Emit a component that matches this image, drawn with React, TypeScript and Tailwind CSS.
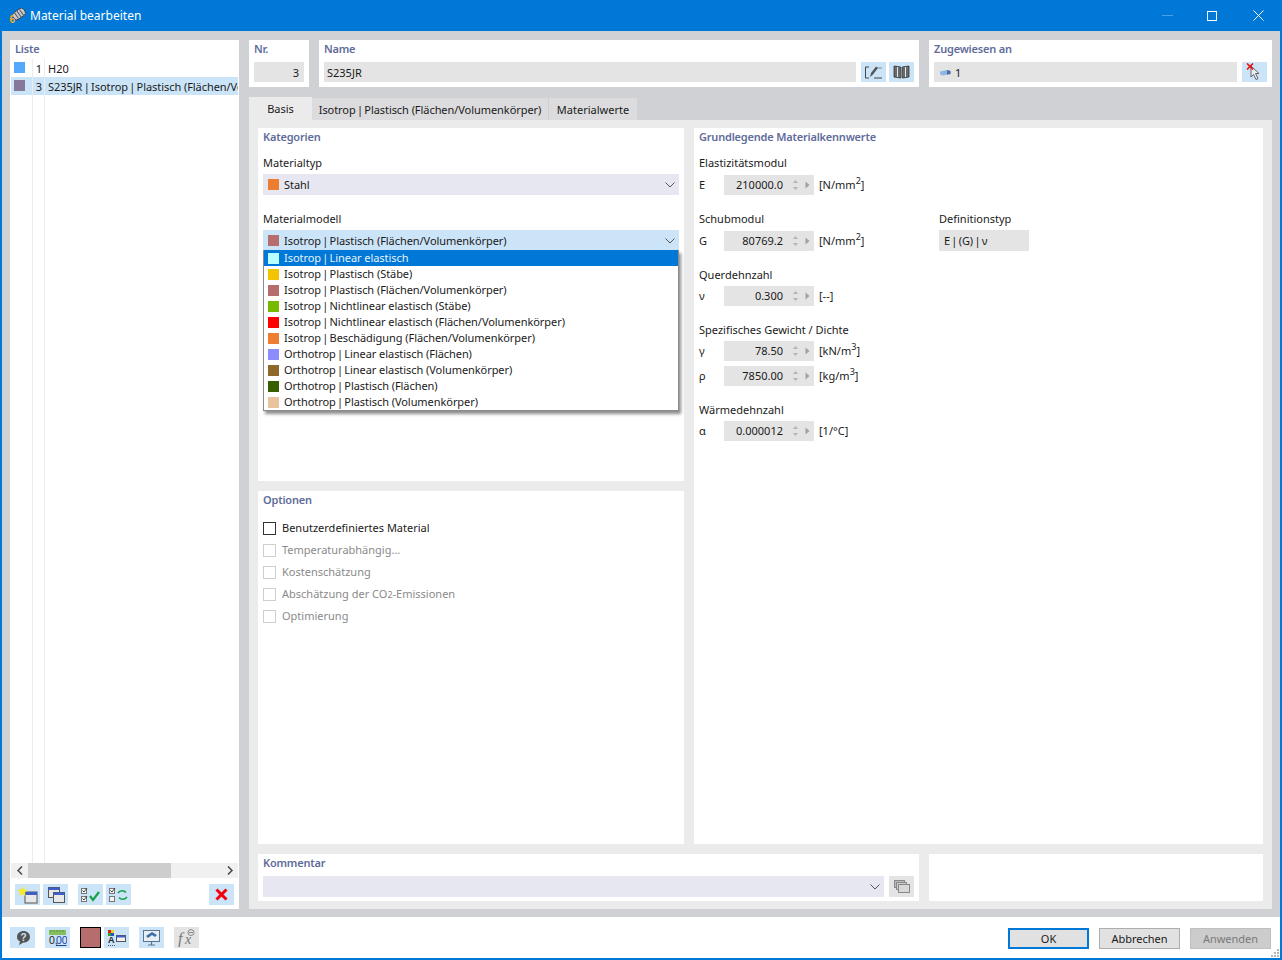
const models = [
  ["#b9ffff", "Isotrop | Linear elastisch"],
  ["#f5c400", "Isotrop | Plastisch (Stäbe)"],
  ["#b56d6d", "Isotrop | Plastisch (Flächen/Volumenkörper)"],
  ["#76b900", "Isotrop | Nichtlinear elastisch (Stäbe)"],
  ["#ff0000", "Isotrop | Nichtlinear elastisch (Flächen/Volumenkörper)"],
  ["#ed7d31", "Isotrop | Beschädigung (Flächen/Volumenkörper)"],
  ["#8c8cff", "Orthotrop | Linear elastisch (Flächen)"],
  ["#8f672a", "Orthotrop | Linear elastisch (Volumenkörper)"],
  ["#375f00", "Orthotrop | Plastisch (Flächen)"],
  ["#e8c39e", "Orthotrop | Plastisch (Volumenkörper)"],
];

// the pipes sit tighter in the original font
const Piped = ({ text }: { text: string }) => (
  <span className="tracking-[-0.06px]">
    {text.split(" | ").map((part, i) => (
      <span key={i}>
        {i > 0 && <span className="mx-[-1.5px]"> | </span>}
        {part}
      </span>
    ))}
  </span>
);

const Chevron = () => (
  <svg width="10" height="6" viewBox="0 0 10 6" fill="none">
    <path d="M0.5 0.5L5 5L9.5 0.5" stroke="#555" strokeWidth="1" />
  </svg>
);

const Combo = ({ color, text, active }: { color?: string; text: string; active?: boolean }) => (
  <div className={`h-[21px] flex items-center pl-[5px] pr-[4px] ${active ? "bg-[#cce4f7]" : "bg-[#e7e7f1]"}`}>
    {color && <div className="w-[11px] h-[11px]" style={{ background: color }} />}
    <span className="ml-[5px] mb-px text-[#1a1a1a]"><Piped text={text} /></span>
    <div className="ml-auto"><Chevron /></div>
  </div>
);

const Title = ({ children }: { children: React.ReactNode }) => (
  <div className="h-[18px] pb-[2px] flex items-center font-semibold tracking-[-0.2px] text-[#5f6c9b]">{children}</div>
);

const Spin = ({ sym, value, unit }: { sym: string; value: string; unit: React.ReactNode }) => (
  <div className="flex items-center h-5">
    <span className="w-[25px] mb-[2px] text-[#1a1a1a]">{sym}</span>
    <div className="w-[90px] h-5 bg-[#e4e4e4] flex items-center">
      <span className="w-[59px] mb-[2px] text-right text-[#1a1a1a]">{value}</span>
      <svg className="ml-[9px]" width="7" height="12" viewBox="0 0 7 12" fill="#b5b5b5">
        <path d="M3.5 1L6 4H1Z" />
        <path d="M3.5 11L6 8H1Z" />
      </svg>
      <svg className="ml-[6px]" width="5" height="8" viewBox="0 0 5 8" fill="#a0a0a0">
        <path d="M0.5 0.5L4.5 4L0.5 7.5Z" />
      </svg>
    </div>
    <span className="ml-[5px] mb-[2px] text-[#1a1a1a]">{unit}</span>
  </div>
);

const Label = ({ className, children }: { className?: string; children: React.ReactNode }) => (
  <div className={`h-4 pb-[2px] flex items-center text-[#1a1a1a] ${className ?? ""}`}>{children}</div>
);

const Check = ({ text, enabled }: { text: React.ReactNode; enabled?: boolean }) => (
  <div className="h-[22px] flex items-center">
    <div className={`w-[13px] h-[13px] border ${enabled ? "border-[#333] bg-white" : "border-[#cfcfcf] bg-white"}`} />
    <span className={`ml-[6px] mb-[2px] ${enabled ? "text-[#1a1a1a]" : "text-[#8a8a8a]"}`}>{text}</span>
  </div>
);

const IconBtn = ({ children, off }: { children: React.ReactNode; off?: boolean }) => (
  <div className={`w-[25px] h-[21px] flex items-center justify-center shrink-0 ${off ? "bg-[#e4e4e4]" : "bg-[#cce4f7]"}`}>
    {children}
  </div>
);

const Win = ({ x, y }: { x: number; y: number }) => (
  <g>
    <rect x={x} y={y} width="11" height="10" fill="#e8e8e8" stroke="#555" />
    <rect x={x} y={y} width="11" height="2.5" fill="#3f5fc8" />
  </g>
);

const Box = ({ x, y }: { x: number; y: number }) => (
  <rect x={x + 0.5} y={y + 0.5} width="5" height="5" fill="#f4f4f4" stroke="#777" />
);

const EditIcon = () => (
  <svg width="19" height="15" viewBox="0 0 19 15" fill="none">
    <path d="M5 2H1.5V13H5M10 13H18" stroke="#444" />
    <path d="M6 12L7 8L12 1.5L14 3L9 9.5Z" fill="#555" />
    <path d="M13 3H18" stroke="#888" />
  </svg>
);

const BookIcon = () => (
  <svg width="17" height="14" viewBox="0 0 17 14">
    <path d="M1 1L7.8 2V13L1 12Z" fill="#6a6a6a" stroke="#333" strokeWidth="0.8" />
    <path d="M16 1L9.2 2V13L16 12Z" fill="#6a6a6a" stroke="#333" strokeWidth="0.8" />
    <path d="M4.5 2V12M12.5 2V12" stroke="#dbe6ef" strokeWidth="1" />
  </svg>
);

const PickIcon = () => (
  <svg width="19" height="18" viewBox="0 0 19 18">
    <path d="M6 3L6 14L8.5 11.5L11 16.5L13 15.5L10.5 10.5L14 10.5Z" fill="#eee" stroke="#555" strokeWidth="0.9" />
    <path d="M2 0.5L8 6.5M8 0.5L2 6.5" stroke="#f01010" strokeWidth="1.6" />
  </svg>
);

const CubeIcon = () => (
  <svg width="11" height="7" viewBox="0 0 11 7">
    <path d="M0 2.5L7 1L10.5 2V5L3 6.5L0 5.5Z" fill="#8fb6e4" />
    <path d="M7 1L10.5 2V5L7 5.5Z" fill="#4d6f9e" />
  </svg>
);

const TitleIcon = () => (
  <svg width="17" height="17" viewBox="0 0 17 17">
    <g transform="rotate(-35 10 7)">
      <rect x="3.5" y="3" width="13" height="8" rx="3" fill="#c6cbd3" stroke="#3e434b" strokeWidth="0.9" />
      <path d="M7 3.5V10.5M10 3.5V10.5M13 3.5V10.5" stroke="#555a63" strokeWidth="1" />
    </g>
    <text x="0.5" y="15.5" fontSize="10" fontWeight="700" fill="#f2b01e" fontFamily="Liberation Sans, sans-serif">6</text>
  </svg>
);

export default function App() {
  return (
    <div className="w-[1282px] h-[960px] flex flex-col border-x-2 border-b-2 border-[#0078d7] bg-white font-['Noto_Sans',sans-serif] text-[11px] leading-none overflow-hidden">
      {/* Title bar */}
      <div className="h-[31px] -mx-[2px] bg-[#0078d7] flex items-center shrink-0 text-white">
        <div className="ml-[9px] w-[18px] flex"><TitleIcon /></div>
        <span className="ml-[3px] text-[12px]">Material bearbeiten</span>
        <div className="ml-auto flex items-center">
          <div className="w-[11px] h-px bg-[#4c9fe3] mr-[34px]" />
          <div className="w-[10px] h-[10px] border border-white mr-[36px]" />
          <svg className="mr-[18px]" width="11" height="11" viewBox="0 0 11 11" stroke="#fff" fill="none">
            <path d="M0.5 0.5L10.5 10.5M10.5 0.5L0.5 10.5" />
          </svg>
        </div>
      </div>

      <div className="flex-1 min-h-0 bg-[#d0d1d5] flex gap-[10px] pl-[8px] pr-[8px] pt-[9px] pb-2">
        {/* List */}
        <div className="w-[229px] bg-white flex flex-col">
          <div className="h-[19px] pb-[2px] pl-[5px] flex items-center font-semibold tracking-[-0.2px] text-[#5f6c9b]">Liste</div>
          <div className="flex-1 min-h-0 flex flex-col ml-px">
            <div className="h-[18px] flex items-center overflow-hidden">
              <div className="w-[21px] h-full shrink-0 pl-[3px] pt-[3px]"><div className="w-[11px] h-[11px] bg-[#54a9ff]" /></div>
              <div className="w-3 h-full shrink-0 border-l border-[#ececec] flex items-center justify-end pr-[2px] text-[#1a1a1a]">1</div>
              <div className="h-full border-l border-[#ececec] flex items-center pl-[3px] text-[#1a1a1a]">H20</div>
            </div>
            <div className="h-[18px] mr-px flex items-center bg-[#cce4f7] overflow-hidden">
              <div className="w-[21px] h-full shrink-0 pl-[3px] pt-[3px]"><div className="w-[11px] h-[11px] bg-[#86789a]" /></div>
              <div className="w-3 h-full shrink-0 border-l border-[#ececec] flex items-center justify-end pr-[2px] text-[#1a1a1a]">3</div>
              <div className="h-full shrink-0 border-l border-[#ececec] flex items-center pl-[3px] text-[#1a1a1a] whitespace-nowrap">
                <Piped text="S235JR | Isotrop | Plastisch (Flächen/Volumenkörper)" />
              </div>
            </div>
            <div className="flex-1 flex">
              <div className="w-[21px]" />
              <div className="w-3 border-l border-[#ececec]" />
              <div className="border-l border-[#ececec]" />
            </div>
          </div>
          {/* Scrollbar */}
          <div className="h-[15px] mx-px bg-[#f0f0f0] flex items-center shrink-0">
            <div className="w-[17px] flex justify-center">
              <svg width="6" height="9" viewBox="0 0 6 9" fill="none" stroke="#444" strokeWidth="1.5"><path d="M5 0.5L1 4.5L5 8.5" /></svg>
            </div>
            <div className="w-[143px] h-full bg-[#cdcdcd]" />
            <div className="ml-auto w-[17px] flex justify-center">
              <svg width="6" height="9" viewBox="0 0 6 9" fill="none" stroke="#444" strokeWidth="1.5"><path d="M1 0.5L5 4.5L1 8.5" /></svg>
            </div>
          </div>
          <div className="h-[31px] shrink-0 pl-[5px] pr-[5px] pt-[6px] flex">
            <div className="flex gap-[3px]">
              <IconBtn>
                <svg width="21" height="18" viewBox="0 0 21 18">
                  <rect x="8" y="6" width="12" height="11" fill="#e8e8e8" stroke="#555" />
                  <rect x="8" y="6" width="12" height="3" fill="#3f5fc8" />
                  <path d="M5.5 0L7 3.5L10.5 4L8 6.5L8.5 10L5.5 8.2L2.5 10L3 6.5L0.5 4L4 3.5Z" fill="#f7e92a" />
                </svg>
              </IconBtn>
              <IconBtn>
                <svg width="18" height="18" viewBox="0 0 18 18"><Win x={1.5} y={1.5} /><Win x={6.5} y={6.5} /></svg>
              </IconBtn>
            </div>
            <div className="flex gap-[3px] ml-[10px]">
              <IconBtn>
                <svg width="19" height="16" viewBox="0 0 19 16" fill="none">
                  <Box x={0} y={1} /><Box x={0} y={9} />
                  <path d="M1.5 3.5L3 5L6 1M1.5 11.5L3 13L6 9" stroke="#333" strokeWidth="0.9" />
                  <path d="M9 9L12 13L18 5" stroke="#16a34a" strokeWidth="2.2" />
                </svg>
              </IconBtn>
              <IconBtn>
                <svg width="19" height="16" viewBox="0 0 19 16" fill="none">
                  <Box x={0} y={1} /><Box x={0} y={9} />
                  <path d="M1.5 3.5L3 5L6 1" stroke="#333" strokeWidth="0.9" />
                  <path d="M9 6C11 3 15 3 17 5.5M18 10C15.5 13 12 13 10 10.5" stroke="#16a34a" strokeWidth="1.6" />
                </svg>
              </IconBtn>
            </div>
            <div className="ml-auto">
              <IconBtn>
                <svg width="13" height="13" viewBox="0 0 13 13" fill="none"><path d="M1.5 1.5L11.5 11.5M11.5 1.5L1.5 11.5" stroke="#f5000a" strokeWidth="3" /></svg>
              </IconBtn>
            </div>
          </div>
        </div>

        {/* Right column */}
        <div className="flex-1 min-w-0 flex flex-col">
          <div className="flex gap-[10px] h-[47px] shrink-0">
            <div className="w-[60px] bg-white px-[5px]">
              <Title>Nr.</Title>
              <div className="mt-[4px] h-5 bg-[#e4e4e4] flex items-center justify-end pr-[5px] text-[#1a1a1a]">3</div>
            </div>
            <div className="w-[600px] bg-white px-[5px]">
              <Title>Name</Title>
              <div className="mt-[4px] flex">
                <div className="flex-1 h-5 bg-[#e4e4e4] flex items-center pl-[3px] text-[#1a1a1a]">S235JR</div>
                <div className="ml-[5px] flex gap-[3px]">
                  <div className="w-[25px] h-5 bg-[#cce4f7] flex items-center justify-center"><EditIcon /></div>
                  <div className="w-[25px] h-5 bg-[#cce4f7] flex items-center justify-center"><BookIcon /></div>
                </div>
              </div>
            </div>
            <div className="flex-1 bg-white px-[5px]">
              <Title>Zugewiesen an</Title>
              <div className="mt-[4px] flex">
                <div className="flex-1 h-5 bg-[#e4e4e4] flex items-center pl-[6px] text-[#1a1a1a]">
                  <CubeIcon /><span className="ml-[4px]">1</span>
                </div>
                <div className="ml-[5px] w-[25px] h-5 bg-[#cce4f7] flex items-center justify-center"><PickIcon /></div>
              </div>
            </div>
          </div>

          {/* Tabs */}
          <div className="mt-[10px] h-[23px] flex items-end shrink-0 text-[#1a1a1a]">
            <div className="w-[63px] h-[23px] bg-[#ebebeb] flex items-center justify-center">Basis</div>
            <div className="w-[237px] h-[22px] bg-[#dcdcde] flex items-center justify-center border-r border-[#cfcfcf]">
              <Piped text="Isotrop | Plastisch (Flächen/Volumenkörper)" />
            </div>
            <div className="w-[88px] h-[22px] bg-[#dcdcde] flex items-center justify-center">Materialwerte</div>
          </div>

          <div className="flex-1 min-h-0 bg-[#ebebeb] px-[9px] pt-2 pb-2 flex flex-col gap-[10px]">
            <div className="flex-1 min-h-0 flex gap-[10px]">
              <div className="w-[426px] flex flex-col gap-[10px]">
                {/* Kategorien */}
                <div className="h-[353px] bg-white px-[5px] relative">
                  <Title>Kategorien</Title>
                  <Label className="mt-[9px]">Materialtyp</Label>
                  <div className="mt-[3px]"><Combo color="#ed7d31" text="Stahl" /></div>
                  <Label className="mt-4">Materialmodell</Label>
                  <div className="mt-[3px]"><Combo active color="#b56d6d" text="Isotrop | Plastisch (Flächen/Volumenkörper)" /></div>
                  {/* Open dropdown */}
                  <div className="absolute left-[5px] top-[122px] w-[416px] bg-white border border-[#8c8c8c] border-t-0 shadow-[2px_3px_3px_rgba(0,0,0,0.45)] z-10">
                    {models.map(([c, t], i) => (
                      <div key={t} className={`h-4 flex items-center pl-[4px] ${i === 0 ? "bg-[#0078d7] text-[#e6f2fc]" : "text-[#1a1a1a]"}`}>
                        <div className="w-[11px] h-[11px]" style={{ background: c }} />
                        <span className="ml-[5px] mb-[2px]"><Piped text={t} /></span>
                      </div>
                    ))}
                  </div>
                </div>
                {/* Optionen */}
                <div className="flex-1 bg-white px-[5px]">
                  <Title>Optionen</Title>
                  <div className="mt-[8px]">
                    <Check enabled text="Benutzerdefiniertes Material" />
                    <Check text="Temperaturabhängig..." />
                    <Check text="Kostenschätzung" />
                    <Check text={<>Abschätzung der CO<span className="text-[9px]">2</span>-Emissionen</>} />
                    <Check text="Optimierung" />
                  </div>
                </div>
              </div>

              {/* Kennwerte */}
              <div className="flex-1 bg-white px-[5px]">
                <Title>Grundlegende Materialkennwerte</Title>
                <Label className="mt-[9px]">Elastizitätsmodul</Label>
                <div className="mt-[4px]"><Spin sym="E" value="210000.0" unit={<>[N/mm<sup className="text-[9px]">2</sup>]</>} /></div>
                <div className="mt-4 flex">
                  <div className="w-[240px]">
                    <Label>Schubmodul</Label>
                    <div className="mt-[4px]"><Spin sym="G" value="80769.2" unit={<>[N/mm<sup className="text-[9px]">2</sup>]</>} /></div>
                  </div>
                  <div>
                    <Label>Definitionstyp</Label>
                    <div className="mt-[3px] w-[90px] h-[21px] bg-[#e4e4e4] flex items-center pl-[5px] text-[#1a1a1a]">
                      <Piped text="E | (G) | ν" />
                    </div>
                  </div>
                </div>
                <Label className="mt-4">Querdehnzahl</Label>
                <div className="mt-[3px]"><Spin sym="ν" value="0.300" unit="[--]" /></div>
                <Label className="mt-4">Spezifisches Gewicht / Dichte</Label>
                <div className="mt-[3px]"><Spin sym="γ" value="78.50" unit={<>[kN/m<sup className="text-[9px]">3</sup>]</>} /></div>
                <div className="mt-[5px]"><Spin sym="ρ" value="7850.00" unit={<>[kg/m<sup className="text-[9px]">3</sup>]</>} /></div>
                <Label className="mt-4">Wärmedehnzahl</Label>
                <div className="mt-[3px]"><Spin sym="α" value="0.000012" unit="[1/°C]" /></div>
              </div>
            </div>

            {/* Kommentar */}
            <div className="h-[47px] shrink-0 flex gap-[10px]">
              <div className="w-[661px] bg-white px-[5px]">
                <Title>Kommentar</Title>
                <div className="mt-[4px] flex">
                  <div className="flex-1 h-[21px] bg-[#e7e7f1] flex items-center justify-end pr-[4px]"><Chevron /></div>
                  <div className="ml-[5px]">
                    <IconBtn off>
                      <svg width="16" height="13" viewBox="0 0 16 13">
                        <rect x="0.5" y="0.5" width="10" height="7" fill="#bbb" stroke="#888" />
                        <rect x="2.5" y="2.5" width="10" height="7" fill="#ccc" stroke="#888" />
                        <rect x="4.5" y="4.5" width="11" height="8" fill="#d8d8d8" stroke="#888" />
                      </svg>
                    </IconBtn>
                  </div>
                </div>
              </div>
              <div className="flex-1 bg-white" />
            </div>
          </div>
        </div>
      </div>

      {/* Footer */}
      <div className="h-[41px] shrink-0 flex items-center pl-[8px] pr-[9px] relative">
        <div className="flex items-center">
          <IconBtn>
            <svg width="16" height="16" viewBox="0 0 16 16">
              <path d="M8.5 1C12 1 15 3.5 15 7C15 10.5 12 12.5 8.5 12.5L4 15L5 11.5C2.5 10.5 2 8.5 2 7C2 3.5 5 1 8.5 1Z" fill="#555" />
              <text x="5.5" y="10.5" fontSize="10" fontWeight="700" fill="#cce4f7" fontFamily="Liberation Sans, sans-serif">?</text>
            </svg>
          </IconBtn>
          <div className="ml-[10px]">
            <IconBtn>
              <svg width="19" height="18" viewBox="0 0 19 18">
                <rect x="1" y="1" width="17" height="5" fill="#86bf60" />
                <path d="M3 1V3M6 1V3M9 1V3M12 1V3M15 1V3" stroke="#4c8a2e" strokeWidth="0.8" />
                <text x="1" y="15" fontSize="10.5" fill="#222" fontFamily="Liberation Sans, sans-serif">0,</text>
                <text x="8" y="15" fontSize="10.5" fill="#1d3f9c" fontFamily="Liberation Sans, sans-serif">00</text>
                <path d="M8 16.5H18.5" stroke="#1d3f9c" />
              </svg>
            </IconBtn>
          </div>
          <div className="ml-[10px] w-[21px] h-[21px] bg-[#b56d6d] border border-black" />
          <div className="ml-[3px]">
            <IconBtn>
              <svg width="19" height="18" viewBox="0 0 19 18">
                <rect x="1" y="1" width="3" height="3" fill="#e01b1b" />
                <rect x="4" y="1" width="3" height="3" fill="#e8d820" />
                <rect x="1" y="4" width="3" height="3" fill="#2e9e2e" />
                <rect x="4" y="4" width="3" height="3" fill="#2a4fd0" />
                <text x="1" y="14" fontSize="9" fontWeight="700" fill="#222" fontFamily="Liberation Sans, sans-serif">A</text>
                <path d="M1 16.5H9" stroke="#555" strokeDasharray="1 1" />
                <rect x="9.5" y="6.5" width="9" height="6" fill="#f0f0f0" stroke="#555" />
                <rect x="9.5" y="6.5" width="9" height="2" fill="#3f5fc8" />
              </svg>
            </IconBtn>
          </div>
          <div className="ml-[10px]">
            <IconBtn>
              <svg width="19" height="18" viewBox="0 0 19 18">
                <rect x="1.5" y="1.5" width="16" height="11" fill="#e8eef4" stroke="#5d7290" />
                <path d="M4 7L10 3L15 6L13 8L10 6L6 9Z" fill="#3e6da5" />
                <path d="M9.5 12.5V15.5M6 16H13" stroke="#5d7290" strokeWidth="1.2" />
              </svg>
            </IconBtn>
          </div>
          <div className="ml-[10px]">
            <IconBtn off>
              <svg width="20" height="19" viewBox="0 0 20 19">
                <text x="1" y="16" fontSize="16" fontStyle="italic" fill="#777" fontFamily="Liberation Serif, serif">f</text>
                <text x="8" y="16" fontSize="14" fontStyle="italic" fill="#777" fontFamily="Liberation Serif, serif">x</text>
                <circle cx="14" cy="4.5" r="3" fill="none" stroke="#888" />
                <path d="M12 4.5H16" stroke="#888" />
              </svg>
            </IconBtn>
          </div>
        </div>
        <div className="ml-auto mt-[2px] flex gap-[10px] text-[#1a1a1a]">
          <div className="w-[81px] h-[21px] bg-[#e1e1e1] border-2 border-[#0078d7] flex items-center justify-center">OK</div>
          <div className="w-[81px] h-[21px] bg-[#e1e1e1] border border-[#adadad] flex items-center justify-center">Abbrechen</div>
          <div className="w-[81px] h-[21px] bg-[#cccccc] border border-[#bfbfbf] flex items-center justify-center text-[#7a7a7a]">Anwenden</div>
        </div>
        <svg className="absolute right-0 bottom-0" width="9" height="9" viewBox="0 0 9 9" fill="#b5b5b5">
          <rect x="6" y="0" width="2" height="2" />
          <rect x="3" y="3" width="2" height="2" />
          <rect x="6" y="3" width="2" height="2" />
          <rect x="0" y="6" width="2" height="2" />
          <rect x="3" y="6" width="2" height="2" />
          <rect x="6" y="6" width="2" height="2" />
        </svg>
      </div>
    </div>
  );
}
